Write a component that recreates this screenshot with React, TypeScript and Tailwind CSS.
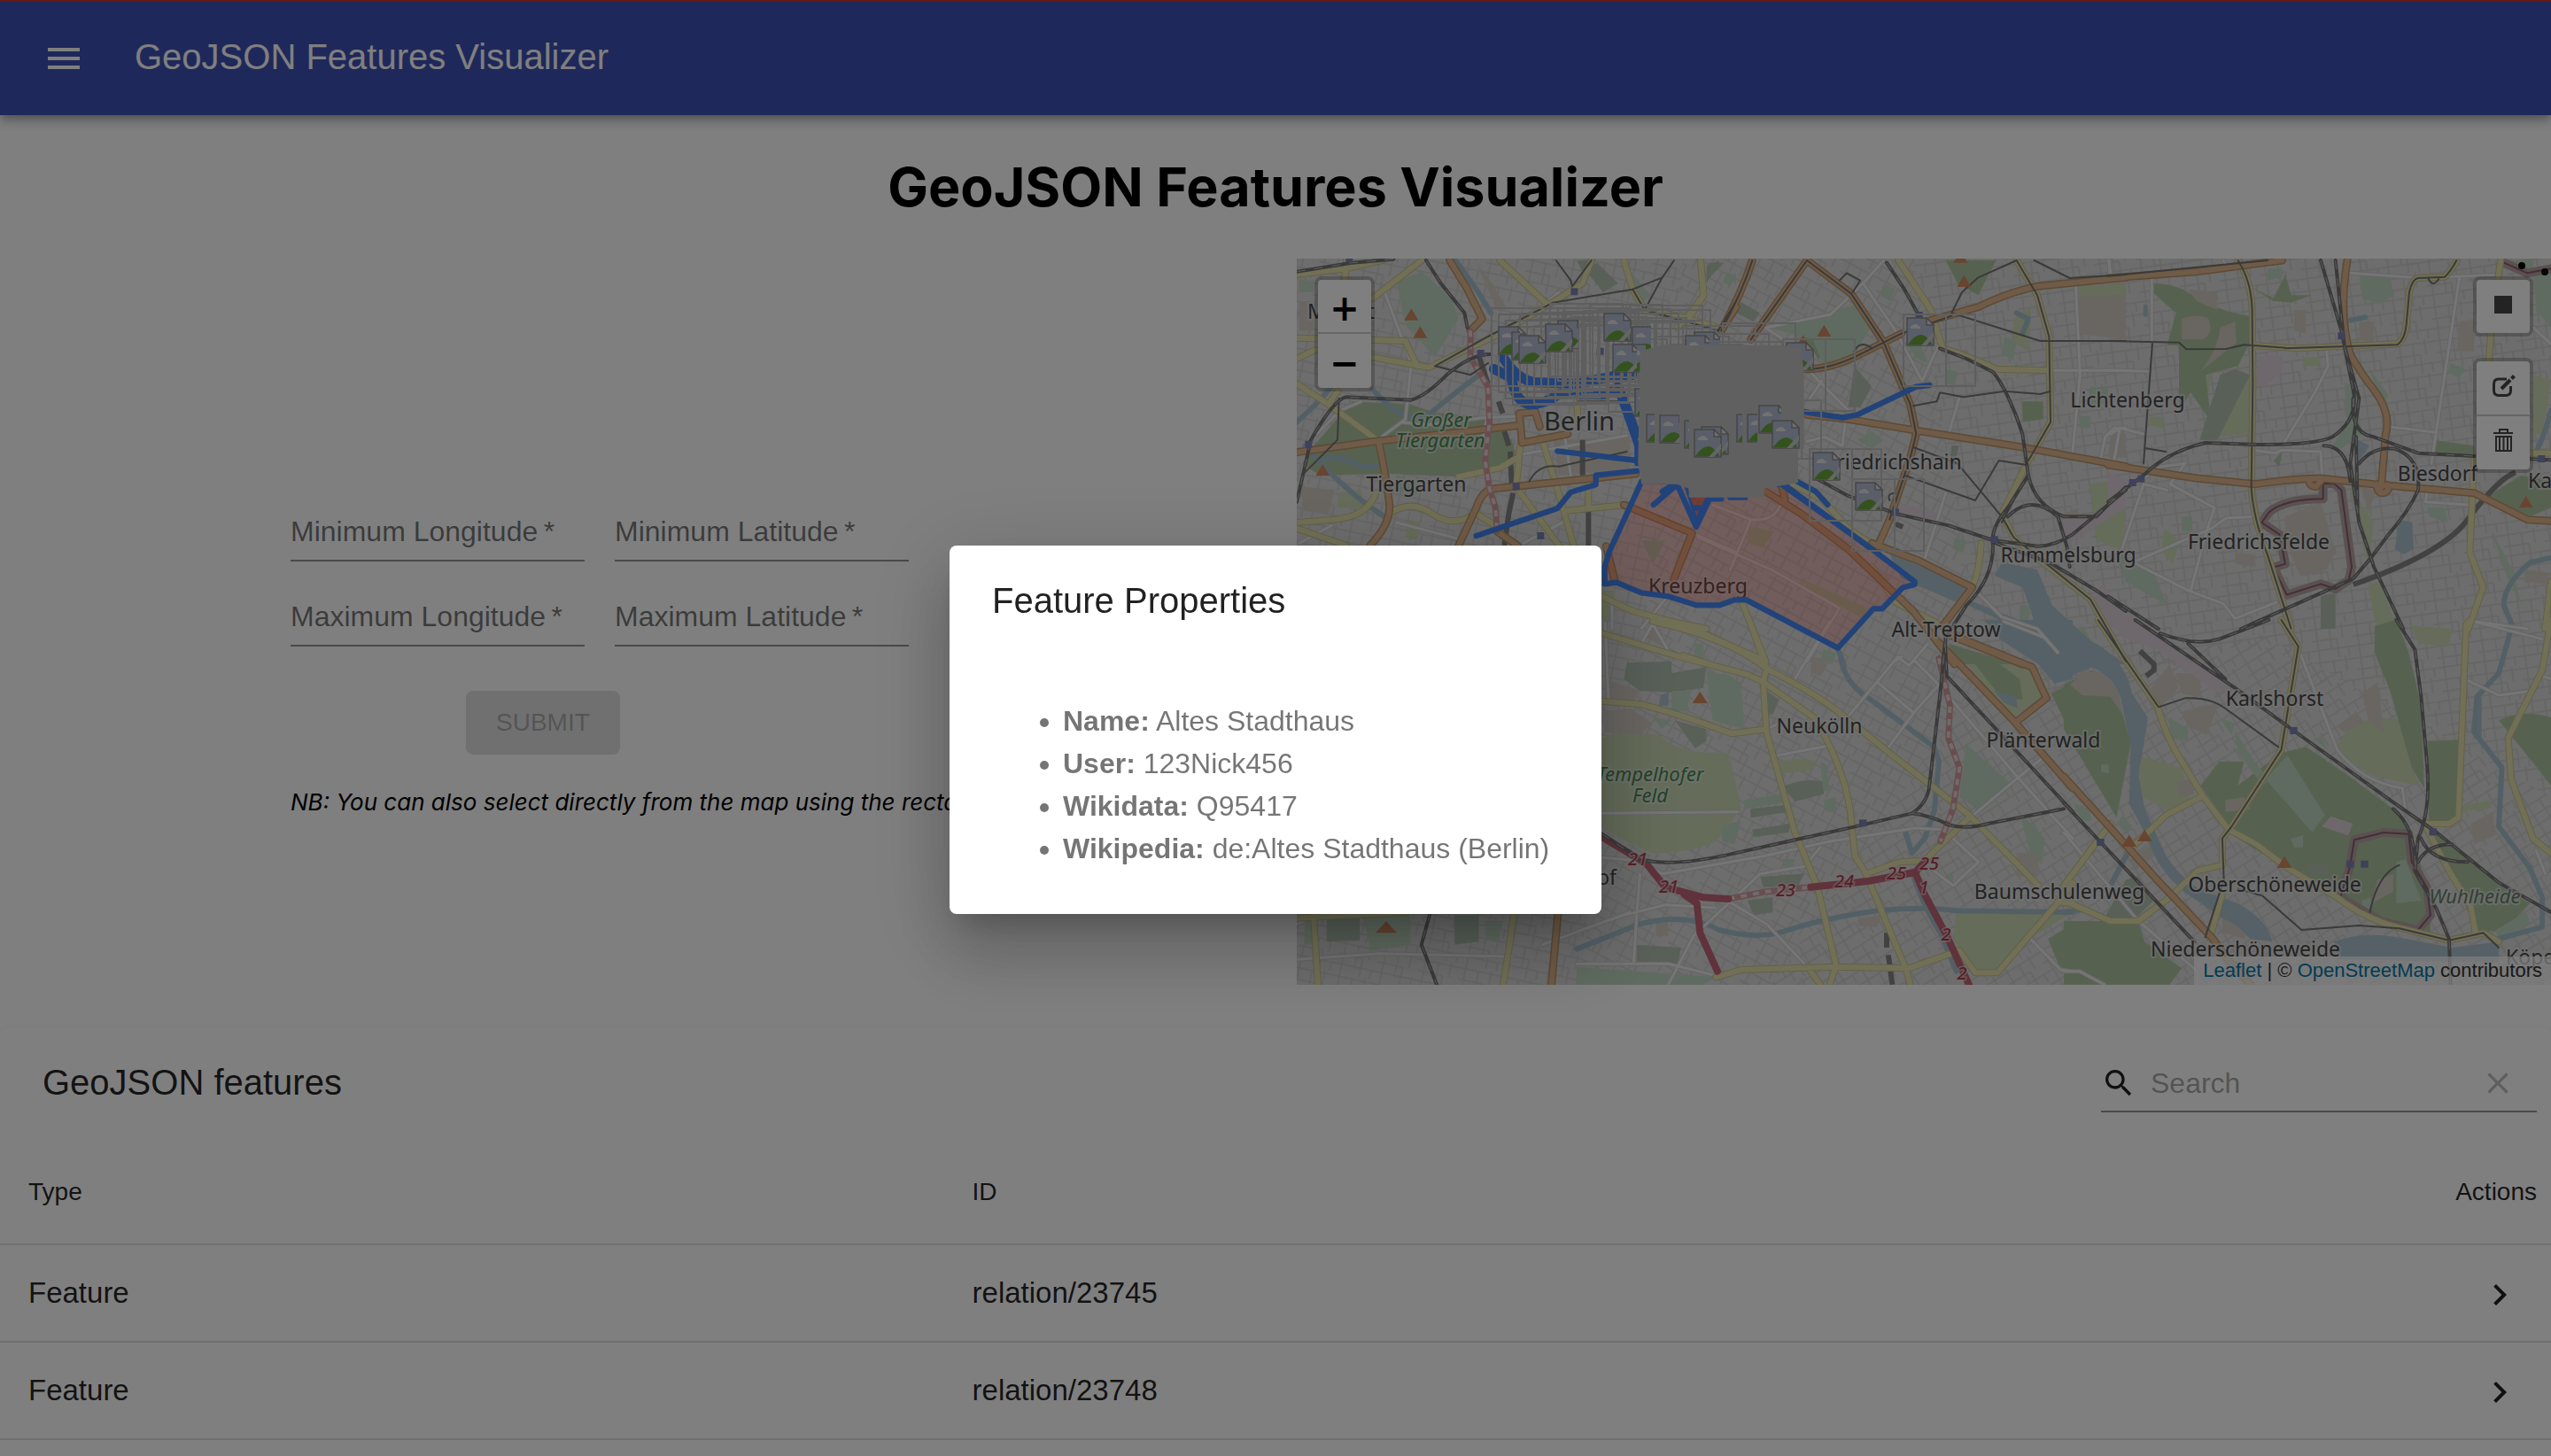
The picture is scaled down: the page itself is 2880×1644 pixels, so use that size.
import React from "react";

/* ---------- Map data ---------- */

type Sector = {
  t: string;
  forest?: string;
  park?: string;
  grass?: string;
  wood?: string;
  built?: string;
  industry?: string;
  waterArea?: string;
  water?: string;
  white?: string;
  yellow?: string;
  orange?: string;
  rail?: string;
  tram?: string;
  motorway?: string;
  tunnel?: string;
  bypass?: string;
  boundary?: string;
  peaks?: [number, number][];
  stations?: [number, number][];
};

const sectors: Sector[] = [
  {
    t: "translate(1460 290) scale(.33333)",
    forest:
      "M70 640L200 490L400 500L480 530L640 540L740 620L760 700L560 745L330 735L90 740L30 700Z",
    park: "M350 80L440 50L540 150L560 210L480 340L380 230ZM1150 60L1210 130L1180 160ZM20 80L70 80L70 120L20 120ZM1480 60L1500 60L1500 100ZM350 740L440 760L420 800L340 790ZM1180 960L1260 960L1220 1040Z",
    grass: "M150 800L230 790L240 850L150 850ZM390 890L430 900L420 960L380 950ZM1044 1130L1090 1130L1080 1230L1044 1230ZM640 640L720 640L720 700L650 700Z",
    wood: "M985 40L1030 20L1100 90L1050 120ZM1400 30L1445 12L1400 90ZM960 12L1020 12L980 50Z",
    built:
      "M20 150L70 150L70 250L20 250ZM620 20L680 100L720 170L690 180ZM880 620L1140 610L1140 720L900 740ZM30 780L140 790L120 870L30 860Z",
    water:
      "M550 12L620 110L670 190M12 560Q80 500 130 440M270 450Q330 520 390 540L440 550Q560 450 630 400M40 640Q180 800 310 880M90 690Q140 670 210 700T300 690",
    white:
      "M310 120L400 360L380 550L300 610M370 560L450 570L640 545L760 540M80 600L160 520L230 490M660 370L670 500L640 620M770 670L1130 605M920 610L940 740M350 900L560 955M780 970L920 895M20 970L130 910M850 160L900 120M1500 1000L1350 935M1180 1258L1260 1160M1080 1260L1080 1160",
    yellow:
      "M12 60L180 40L300 12M180 12L175 80M435 12L270 140M12 275L380 285M12 345L75 315M270 340L460 375L700 260L860 165L980 90L1010 12M700 12L860 160M12 430L120 500L290 625M380 285L420 370M120 500L150 455M770 630L755 780L900 978M840 610L890 770L950 978M1380 12L1390 130L1330 210L1300 240M1120 12L1150 110L1190 180L1300 200L1440 240M325 870Q400 820 470 870T620 870L700 920M12 900L140 890Q250 880 280 800M12 920L180 978M925 860L1130 840M1000 770L1000 850M1044 1150L1150 1200L1300 1240L1400 1260M560 745L700 715L760 680M960 480L965 560",
    orange:
      "M12 662L280 625L560 595L770 570L765 530L820 525L835 575M770 570L775 630L930 600M290 630Q310 720 325 830Q335 900 260 978M560 978L620 850Q640 790 680 785L1160 735M530 12L590 110L640 210L600 250M1120 840L1350 935L1290 1090M1500 170L1450 250M1060 980L1090 1100M690 930L760 978",
    rail: "M12 50L200 20L340 8M450 12L500 90L580 190L590 240M12 830L60 620Q140 480 180 475Q300 480 400 485Q450 470 520 400Q600 330 670 330",
    tram: "M480 370L660 270L880 155L1150 110L1250 70L1290 12M480 370L600 400L660 360M945 100L1010 12M945 100L940 80L890 12M1150 110L1190 180L1440 250L1500 150M1190 180L1250 70M960 490L1120 490M30 740L150 620L155 480M800 760Q830 700 900 710L1130 660",
    tunnel: "M600 250L600 340L660 440L665 560L650 690L665 785L685 850L690 930",
    bypass: "M630 340L660 430M695 490L710 530M715 590L730 640M735 660L740 780M745 800L730 870L715 978M980 620L980 740M1000 850L1000 978",
    peaks: [[400, 195], [430, 255], [100, 722]],
    stations: [[952, 118], [635, 327], [52, 635], [755, 778], [838, 945], [1040, 320], [190, 6]],
  },
  {
    t: "translate(1900 290) scale(.33333)",
    park: "M290 240L480 190L600 160L640 230L560 370L480 380L440 280ZM680 90L720 110L700 150L670 130ZM890 380L930 390L920 440L890 430ZM1090 270L1130 290L1120 350L1080 330ZM150 50L180 70L160 100L135 85ZM590 620L640 590L680 620L640 650ZM750 290L800 280L830 360L800 350ZM1380 440L1440 440L1440 500L1380 500ZM1340 540L1380 540L1380 580L1345 580ZM40 1310L70 1310L70 1380L40 1380ZM1140 1180L1180 1180L1170 1230L1140 1230ZM920 950L960 960L950 1000L915 990Z",
    forest: "M300 240L400 220L480 290L460 350L410 270ZM890 12L1060 12L1000 130L930 90ZM1150 490L1220 490L1220 550L1150 560ZM900 1310L1130 1380L920 1380Z",
    wood: "M580 370L640 440L600 510L560 510ZM190 150L260 190L240 220L180 190ZM90 20L140 20L80 80ZM910 640L935 640L925 680L905 680Z",
    grass: "M1340 100L1500 90L1500 130L1340 130ZM1380 770L1500 750L1500 1000L1400 960ZM220 910L310 930L270 985L220 970ZM400 1090L630 1190L600 1220L420 1120ZM1120 210L1180 170L1170 320L1120 290Z",
    built: "M1340 130L1500 130L1500 280L1340 260ZM1260 880L1340 850L1340 960L1300 960ZM650 1060L700 1080L680 1130ZM1450 580L1500 600L1500 680L1440 680Z",
    industry: "M720 830L880 870L870 910L730 880ZM1270 890L1400 880L1500 790L1500 850L1330 960L1300 960ZM1420 1110L1500 1200L1500 1300L1380 1160Z",
    waterArea:
      "M700 1005L850 1065L980 1130L950 1180L740 1090ZM955 1175L1200 1290L1230 1380L1500 1380L1380 1300L1250 1180L1200 1060L1080 1035L1055 1080L1150 1120L1180 1200L1190 1250L975 1165Z",
    water: "M525 1330L545 1380M1130 190L1170 210L1150 260",
    white:
      "M280 240L500 195L610 90L680 12M280 240L340 280M610 90L720 250L810 420L870 290M430 390L560 520M470 420L430 480M1330 90L1345 400L1320 660M1240 385L1500 385M935 480L900 600M890 800L820 1020M1000 1140L1080 1220L1200 1260L1270 1340M550 560L540 640L480 610L420 625M1415 680L1430 610L1460 580L1500 580M420 1370L530 1190L300 1060L50 950M160 1060L230 890M100 840L230 890Q310 900 335 830M720 1370L740 1355M1440 12L1450 60",
    yellow:
      "M60 12L70 130L20 210M730 12L840 180L880 310Q980 340 1060 380L1240 385M1130 12L1200 130L1240 270L1245 560L1170 690L1080 870L1120 950L1200 1020L1380 1160L1500 1370M370 770L470 820L560 920L650 980M1010 970Q1005 1060 980 1120M0 1245L280 1370M200 1170L280 1370M640 1050L720 1170L860 1240M0 1350L90 1380",
    orange:
      "M235 12Q200 120 130 250M420 12L230 280M420 12L570 125L680 290L770 500L790 600L770 680L700 890L660 980M400 380Q480 385 580 340L740 260M840 215L1000 170Q1100 120 1200 100L1500 70M420 535L560 550L800 590L1150 645L1500 710M280 795L400 870L560 990L780 1200L920 1380M640 970L800 1030L980 1120L880 1250M900 1280L1150 1380M335 780L345 820M0 1015L30 940",
    rail: "M690 20L750 110L800 200M870 310L960 345L1050 390Q1100 450 1150 600L1170 740L1100 850Q1040 920 1050 980Q1050 1090 960 1180L890 1290L880 1380M450 750L560 810L720 870L900 910L1050 960L1200 980Q1260 980 1320 940L1500 790M1170 740Q1190 840 1290 880L1400 880L1500 780M1100 880Q1180 800 1270 880L1300 980L1310 1050M1060 970L1250 1040L1400 1130L1500 1200",
    tram: "M235 12Q200 120 130 250M420 12L230 280M420 12L570 125L680 290L770 500L790 600L770 680L700 890M400 380Q480 385 580 340L740 260L910 200M580 320Q600 280 640 310M1190 12L1310 72L1500 60M1130 12L1000 70L945 120L910 190L1210 285L1500 285M1130 12L1200 130L1240 270L1245 560L1170 690M780 505L860 490L870 460L950 475L1090 455L1210 465L1245 455M780 645L930 700L1080 880L1120 950L1380 1160L1500 1370M750 740L990 825L1070 690L1165 705M530 80L555 55L600 80L575 120M1165 740L1080 900M720 800Q690 800 700 825",
    bypass: "M690 910L660 980M720 905L745 915",
    peaks: [[478, 250], [952, 82], [940, 0], [407, 285]],
    stations: [[720, 865], [1055, 958], [800, 198]],
  },
  {
    t: "translate(2380 290) scale(.33333)",
    forest:
      "M150 90Q240 90 300 140Q400 190 480 200L480 290L440 370L330 400L350 560L280 460L240 520L240 300L200 300L230 190L150 120ZM480 100L560 140L600 60L620 130L690 130L620 155L560 150ZM1270 820L1400 740L1500 760L1500 850L1430 880L1380 870ZM1100 620L1240 640L1240 670L1100 670Z",
    park: "M850 60L950 60L970 130L920 160L860 140ZM540 40L590 40L590 70L540 80ZM880 370L950 470L930 500ZM1160 360L1210 380L1190 410L1150 390ZM20 1000L150 1060L200 1180L60 1100ZM250 880L285 880L280 930L250 930ZM1300 930L1370 1060L1400 1180L1340 1060ZM1440 60L1500 40L1500 240L1450 180ZM1330 12L1440 12L1440 50ZM800 420L840 470L860 600L790 650L760 640L810 560ZM1080 850L1140 850L1150 900L1090 880Z",
    wood: "M380 400L430 380L480 400L370 620L310 620ZM720 1150L770 1140L770 1260L720 1260ZM560 690L590 660L580 710Z",
    grass: "M480 400L480 600L370 610ZM660 340L720 340L715 370L660 370ZM820 780L900 900L880 1060L850 900ZM880 1110L920 1100L980 1260L910 1260ZM1440 400L1500 420L1470 600L1440 600ZM140 540L190 545L185 580L140 570ZM190 920L240 960L220 1040L180 1000ZM250 400L350 400L340 460L250 450Z",
    built: "M250 210Q300 190 340 210Q360 260 320 280L250 280ZM310 390Q370 320 380 240L430 220L435 290ZM270 110L370 120L370 180L300 150ZM1190 220L1240 210L1240 320L1180 320ZM860 780L910 790L880 870ZM430 1000L500 1010L490 1050L430 1040ZM1410 1060L1500 1070L1490 1110L1410 1100ZM850 220L900 220L900 290L850 280ZM600 880L720 830L770 1000L740 1060L650 1080L600 960ZM630 180L670 180L670 260L630 250Z",
    industry: "M510 340L590 330L590 390L530 440L500 430ZM0 730L80 760L0 820ZM0 1160L150 1260L0 1260Z",
    waterArea: "M985 890L1030 900L1035 990L1000 1008L972 990ZM845 620L885 640L850 690ZM120 160L135 165L132 205L118 200Z",
    water: "M1500 1020L1430 1035Q1340 1110 1340 1180L1370 1250M1500 520Q1480 600 1450 660M820 215L870 205",
    white:
      "M148 60L148 290M820 55L1030 70M1140 68L1330 60M740 320L745 370L700 460L590 640M1190 70L1110 600L1095 700M950 575L1110 595M490 655L570 665L585 655L720 660L725 750M10 600L40 580L120 600M20 690L40 580M85 1035L350 920L400 885L490 880M280 1130L330 940L360 850L210 770L260 700L180 710L120 750M85 1035L270 1130L390 1175L430 1225L570 1170M120 770L40 1010M120 770L200 790M1080 800L1075 830L1220 840M1440 240L1500 295M0 385L140 388M1240 1235L1420 1260M390 12L400 30M5 12L5 60",
    yellow:
      "M440 12Q490 90 488 200L490 430L485 780Q490 880 540 1010L620 1260M490 300L640 310L980 295Q1005 280 1010 230L1020 120Q1030 75 1050 72L1140 68Q1160 50 1180 12M1330 12L1300 200L1290 350M1240 680L1225 1000L1270 1120L1220 1260M1430 665L1500 665M1500 1100L1480 1260",
    orange:
      "M0 72L300 50L590 12M810 12Q780 200 820 330Q860 400 900 450Q960 530 940 600L925 780M0 705L300 750L500 770Q640 750 720 750L900 770L1240 800Q1340 850 1420 890L1500 895M910 770Q910 800 932 800Q955 795 945 772M680 752Q680 780 705 778L720 760",
    rail: "M720 12L790 250L830 450Q850 550 760 610Q700 640 480 635L330 630Q200 660 120 740L0 830M770 12L800 300L850 480L820 700L850 900L900 1050L1000 1260M830 480Q820 600 900 610L1050 665L1240 675M730 640Q810 640 820 760M840 610L845 860M850 700Q900 640 970 650Q1060 680 1050 790Q1020 860 950 940L890 1020L830 1090L450 1260M0 1150L170 1260M1430 685L1500 688",
    tram: "M0 65L300 35L540 12M0 285L240 290L265 313L400 312L460 298L600 308M150 290L120 700M125 648L195 660M440 12Q490 90 488 200L490 430L485 780Q490 880 540 1010L620 1260M600 310L980 298Q1005 280 1010 230L1020 120Q1030 75 1050 72L1140 68Q1160 50 1180 12M1085 75Q1100 105 1120 75",
    bypass: "M830 1110Q1120 1010 1210 900Q1320 750 1380 730",
    boundary:
      "M520 900L545 865Q600 820 728 820L728 768L765 768L790 790L825 1050L815 1095L770 1125L720 1108L605 1145L560 1052L600 1040L580 940ZM1340 20L1420 55L1500 40",
    peaks: [[1415, 830]],
    stations: [[790, 268], [83, 765], [112, 752], [1468, 684]],
  },
  {
    t: "translate(1780 700) scale(.35714 .33333)",
    grass: "M80 400Q150 370 260 390Q330 460 480 450L520 640L440 750Q360 790 240 790Q140 750 80 700ZM1200 990L1568 990L1430 1080L1340 1190L1260 1190L1190 1080ZM1190 90L1430 165L1470 260L1370 330ZM640 480L700 470L760 480L740 510L650 520Z",
    park: "M300 240L360 240L350 310L300 310ZM410 170L520 210L530 370L430 340ZM240 330L300 340L270 370ZM460 700L520 680L500 760L460 750ZM770 480L790 490L800 580L780 580ZM780 610L820 600L820 650L790 650ZM1230 420L1380 560L1280 650L1210 600ZM780 100L820 110L810 150L770 140ZM1400 650L1480 740L1470 830L1430 780ZM0 1175L440 1210L400 1235L0 1235ZM650 810L690 810L680 840L650 835ZM1170 860L1190 860L1190 890L1170 885ZM420 180L480 185L510 210L450 215ZM530 610L650 590L650 620L530 640Z",
    wood: "M160 145L300 140L300 180L410 160L400 230L300 245L200 240L150 200ZM310 340L410 370L410 410L375 435ZM650 565Q720 530 790 550L780 590L690 615ZM600 240L640 270L620 320L600 320ZM190 1100L330 1110L320 1165L190 1160ZM540 950L620 940L620 990L560 1000ZM580 870L720 860L700 900L590 905ZM550 640L680 625L670 650L550 670ZM555 710L675 690L670 720L560 735Z",
    forest: "M1500 250L1568 210L1568 330L1540 335ZM1490 1080L1568 1030L1568 1180L1530 1185ZM1230 110L1300 120L1400 200L1410 270L1340 260ZM470 200L520 215L520 350L440 330L440 230Z",
    built: "M85 310L170 300L240 350L200 390L85 380ZM220 30L270 30L260 80L220 60ZM90 200L200 240L180 280L90 260ZM740 120L800 140L770 190L740 180ZM890 1010L960 1000L950 1040L890 1035ZM250 1020L290 1020L290 1070L250 1070ZM1390 790L1460 790L1460 870L1390 870Z",
    waterArea: "M1290 0L1568 0L1568 200L1510 215L1460 150L1430 130L1330 60ZM1320 240L1390 260L1395 300L1350 280ZM265 255L290 245L290 290L260 290Z",
    water:
      "M835 130Q850 220 930 270L1130 430L1145 480L1130 650L1100 740L1060 790L1040 720M0 1115L200 1030Q350 990 450 1050Q560 1080 640 1060Q780 1010 950 985Q1100 970 1200 985L1568 990M1060 850Q1090 960 1150 1060L1200 1190",
    white:
      "M90 10L95 130L100 270M210 70L240 12L290 105M1110 80L1050 155L1015 125L860 325M690 200L800 5M950 210L1065 315L1145 220L1070 140M1065 315L980 440M630 460L800 425M1145 220L1400 540L1568 740M1250 665L1400 530L1470 470M80 805L190 815L270 860L590 800L800 750L1070 705L1160 710L1270 820L1190 900L1130 850M80 655L510 650M200 860L190 1000L180 1165M0 1055L150 1000L280 965L440 975M290 1235L370 1070L480 960L580 860L720 835L770 770M490 960L600 1030L720 1165M0 1165L290 1165L440 1205M1430 1075L1530 1185L1568 1190M1350 5L1480 60L1520 110M600 370L640 350",
    yellow:
      "M80 45L310 120L540 185L590 210M240 5Q480 60 600 165Q760 250 850 330L1000 460L1240 660L1460 900M550 12L600 165L590 210L600 380L690 720L760 900L820 1170L800 1235M590 210L750 330Q860 520 870 700L880 800L915 860L1040 1180L1055 1235M80 275L200 285Q300 310 490 385L600 370M915 860L1020 820L1100 815L1240 670M440 1210L520 1185L820 1175L1050 1180L1210 1120L1260 1195L1330 1195L1430 1070L1520 960L1568 890M740 1190L770 1235M1520 955L1568 960",
    orange: "M1130 60L1380 340L1568 570M1170 30L1210 60L1440 160L1485 265L1390 345",
    rail: "M80 725L200 810Q300 840 500 790L880 700L1060 655Q1110 620 1115 560L1150 240L1165 80M1165 80L1170 190L1300 340L1568 650M1060 655Q1110 660 1180 695Q1230 710 1300 690L1540 640",
    motorway:
      "M80 735L220 825L280 905L400 940L480 945M740 905L920 885L1070 855L1100 930L1170 1070L1240 1235M1070 855L1100 820M340 930L380 960L390 1060L445 1190",
    tunnel: "M480 945L600 920L740 905M1145 130L1180 290L1175 400L1210 500L1190 640L1150 750",
    bypass: "M980 1060L980 1110M985 1135L990 1170M992 1190L998 1235",
    peaks: [[390, 262]],
    stations: [[905, 688]],
  },
  {
    t: "translate(2330 700) scale(.35075 .33333)",
    forest:
      "M0 220L90 170L170 240L190 320L215 420L170 670L0 370ZM440 560L500 480L580 480L560 560L700 450L780 430L920 530L1060 640L1120 720L1180 950L1180 1060L1020 1020L880 930L700 830L560 740ZM1000 20L1070 0L1110 110L1150 290L1160 570L1120 500L1050 240L1000 110ZM1170 410L1280 405L1260 680L1175 680ZM1400 340Q1480 300 1568 330L1568 560L1500 470ZM0 1020L240 1020L260 1090L380 1180L340 1235L0 1235ZM1180 700L1400 900L1500 960L1420 1050L1330 1060L1250 860Z",
    wood: "M200 880L240 870L290 950L230 1010L130 1010ZM780 830L840 820L860 860L800 870Z",
    grass:
      "M870 440L920 360L1000 330L1090 340L1120 480L1140 560L1000 530ZM240 460L380 500L410 620L330 640L250 600ZM660 690L740 660L790 720L720 760ZM1120 20L1250 30L1240 90L1140 80ZM1030 60L1090 160L1120 400L1110 400L1070 230ZM1280 630L1380 610L1370 640L1280 650Z",
    park: "M20 40L60 20L100 90ZM550 370L600 460L660 540L640 560L560 450ZM800 400L830 400L850 440ZM700 480L720 460L840 660L800 720L650 540ZM190 660L220 700L200 720L170 690ZM120 490L145 490L145 520L120 515ZM730 740L770 730L770 770L740 770ZM1070 820L1100 810L1150 950L1070 960ZM960 950L990 940L985 980L960 980ZM880 1110L930 1090L960 1140L890 1140ZM1010 1100L1080 1110L1080 1140L1010 1130ZM1390 1050L1490 990L1500 1030L1400 1080ZM340 330L400 370L400 410L340 400ZM500 330L550 350L540 390ZM30 620L80 640L90 680L60 680Z",
    built:
      "M20 220L60 180L130 170L170 200L190 320L150 260L60 255ZM280 230L340 150L370 230L310 295ZM380 310L500 280L460 390L400 360ZM360 550L410 540L420 590L370 600ZM880 360L940 310L970 350L900 380ZM960 250L1010 210L1030 380L980 340ZM360 180L440 180L440 260L380 250ZM510 1010L600 1040L580 1080L510 1060ZM520 610L580 600L600 640L520 650ZM1010 880L1060 860L1060 920L990 960ZM1310 690L1380 650L1390 730L1320 760ZM210 810L280 760L290 800L230 850Z",
    industry: "M150 0L230 0L540 230L500 250L300 100L200 60ZM830 700L860 665L930 690L915 730Z",
    waterArea:
      "M0 20L120 90Q200 150 220 250L270 330Q260 420 240 520L260 640L330 800Q380 880 450 920L560 960Q660 1020 670 1090L600 1080Q560 1030 510 1010L400 930Q300 850 270 740L210 620L215 430L190 300Q180 200 90 160L0 200ZM870 1090Q960 1050 1100 1080L1250 1110L1400 1090L1400 1160L880 1150ZM1320 270L1345 260L1345 400L1320 390Z",
    water: "M1440 30L1400 180L1330 260L1320 380L1410 500L1400 700L1500 840L1540 940L1540 1040L1400 1080M210 780L150 900M0 990L60 980",
    white:
      "M760 110L880 440Q960 550 1090 570L1100 650L1160 690M1320 5L1540 65M1300 205L1400 255L1510 240M1540 190L1568 200M0 720L240 1020L430 1190L430 1235M1550 860L1520 780M0 1190L50 1190L130 1235",
    yellow:
      "M110 0L300 290Q330 400 380 480L450 600L530 710L620 760L720 840L880 940Q980 1020 1090 1045L1240 1085L1350 1060L1400 1090M700 0L755 90L700 440L540 700L510 740L510 830L430 850L340 940L240 1020L150 1020L20 960M440 600L330 660L210 780M510 930L470 1080M1310 0L1295 15L1270 670L1240 690L1160 690L1240 850L1310 970L1325 1060M1568 0L1540 170L1430 400L1440 540L1510 740L1568 790M0 900L150 690",
    orange: "M0 530L300 880L480 1080L520 1140L600 1235",
    rail: "M230 0L550 230L740 375L1050 610L1200 720L1400 890L1568 990M310 45Q420 90 500 65L660 0M400 80L520 200M1070 0L1130 100L1150 260L1170 500Q1180 650 1140 740L1130 850L1200 980L1240 1080L1245 1235M1060 640Q1130 700 1130 830M1150 740Q1180 820 1300 820M1140 820Q1170 760 1250 760M0 620L120 755L420 1090",
    tram: "M110 0L305 295L390 265Q470 260 520 300L690 430M700 0L755 90L700 440L540 700L510 740L515 880L455 1075M560 910L640 935L765 1050L950 1035L1080 1045L1240 1085L1350 1060L1400 1110M985 990Q1010 860 1080 830",
    bypass: "M245 105L290 150L290 170L265 190",
    boundary: "M920 840L935 745L1030 720L1110 725L1120 820L1170 910L1180 1000L1140 1050L1020 1020L890 940Z",
    peaks: [[210, 748], [260, 730], [710, 820]],
    stations: [[740, 375], [118, 753], [1188, 718], [922, 827], [968, 827]],
  },
  {
    t: "translate(1060 600) scale(.49751 .33333)",
    wood: "M880 1300L955 1300L955 1385L880 1390ZM1170 1300L1225 1300L1225 1390L1170 1400Z",
    park: "M960 1300L1070 1300L1070 1400L980 1420ZM830 1310L850 1310L850 1400L830 1400ZM1240 1320L1280 1320L1270 1390L1240 1380Z",
    white: "M1370 1400L1568 1290M812 1330L860 1300M812 1450L1000 1430L1300 1440",
    yellow: "M1305 1290L1295 1400L1280 1536M850 1290L860 1536M812 1310L1060 1290",
    orange: "M1405 1290L1390 1536",
    rail: "M1115 1290L1095 1400L1130 1536",
    peaks: [[1015, 1340]],
  },
];

type Label = { x: number; y: number; s: string; k?: "city" | "park" | "dim"; a?: "start" | "end" };

const labels: Label[] = [
  { x: 1783, y: 486, s: "Berlin", k: "city" },
  { x: 1627, y: 482, s: "Großer", k: "park" },
  { x: 1626, y: 505, s: "Tiergarten", k: "park" },
  { x: 1599, y: 555, s: "Tiergarten" },
  { x: 1514, y: 360, s: "Moabit" },
  { x: 1917, y: 670, s: "Kreuzberg" },
  { x: 2138, y: 530, s: "Friedrichshain" },
  { x: 2402, y: 460, s: "Lichtenberg" },
  { x: 2335, y: 635, s: "Rummelsburg" },
  { x: 2197, y: 719, s: "Alt-Treptow" },
  { x: 2550, y: 620, s: "Friedrichsfelde" },
  { x: 2752, y: 543, s: "Biesdorf" },
  { x: 2854, y: 551, s: "Kaulsdorf", a: "start" },
  { x: 2054, y: 828, s: "Neukölln" },
  { x: 2307, y: 844, s: "Plänterwald" },
  { x: 2568, y: 797, s: "Karlshorst" },
  { x: 1863, y: 882, s: "Tempelhofer", k: "park" },
  { x: 1863, y: 906, s: "Feld", k: "park" },
  { x: 1825, y: 999, s: "Tempelhof", a: "end" },
  { x: 2325, y: 1015, s: "Baumschulenweg" },
  { x: 2568, y: 1007, s: "Oberschöneweide" },
  { x: 2535, y: 1080, s: "Niederschöneweide" },
  { x: 2794, y: 1020, s: "Wuhlheide", k: "dim" },
  { x: 2829, y: 1089, s: "Köpenick", a: "start" },
];

const exits: [number, number, string][] = [
  [1849, 977, "21"],
  [1884, 1008, "21"],
  [2016, 1012, "23"],
  [2082, 1002, "24"],
  [2141, 993, "25"],
  [2178, 982, "25"],
  [2172, 1009, "1"],
  [2197, 1062, "2"],
  [2215, 1106, "2"],
];

const markers: [number, number, number][] = [
  [1691, 368, 32], [1706, 374, 10], [1714, 378, 32], [1758, 361, 24], [1744, 365, 32],
  [1842, 368, 22], [1810, 353, 32], [1838, 388, 20], [1820, 388, 28], [1912, 374, 30], [1902, 378, 28],
  [2016, 386, 32], [2152, 358, 32], [2046, 510, 32], [2094, 544, 32],
];

const blockMarkers: [number, number, number][] = [
  [1845, 438, 6], [1858, 467, 10], [1873, 468, 23], [1901, 474, 6], [1920, 481, 32], [1912, 484, 32],
  [1960, 467, 7], [1972, 467, 12], [1985, 457, 26], [2000, 474, 32],
];

/* Outlines left by image tiles that overlap around the city centre. */
const tileRects: [number, number, number, number][] = [
  ...Array.from({ length: 14 }, (_, i) => [1684 + i * 8, 348 + ((i * 7) % 22), 82, 88] as [number, number, number, number]),
  ...Array.from({ length: 12 }, (_, i) => [1750 + i * 9, 343 + ((i * 5) % 24), 82, 82] as [number, number, number, number]),
  ...Array.from({ length: 8 }, (_, i) => [1840 + i * 15, 362 + ((i * 9) % 30), 82, 82] as [number, number, number, number]),
  [1960, 438, 74, 80],
  [1958, 452, 98, 66],
  [1816, 383, 66, 82],
];

function Layer({ k, stroke, width, dash, fill, cap = "round" }: {
  k: keyof Sector;
  stroke?: string;
  width?: number;
  dash?: string;
  fill?: string;
  cap?: "round" | "butt";
}) {
  return (
    <>
      {sectors.map((s, i) =>
        s[k] ? (
          <path
            key={i}
            d={s[k] as string}
            transform={s.t}
            fill={fill ?? "none"}
            stroke={stroke ?? "none"}
            strokeWidth={width}
            strokeDasharray={dash}
            strokeLinecap={cap}
            strokeLinejoin="round"
            vectorEffect="non-scaling-stroke"
          />
        ) : null,
      )}
    </>
  );
}

function BrokenImage({ x, y, w }: { x: number; y: number; w: number }) {
  return (
    <svg x={x} y={y} width={w} height="33">
      <path d="M1 1H23L31 9V32H1Z" fill="#b2bcd2" stroke="#8c8c8c" strokeWidth="1.5" />
      <path d="M23 1V9H31Z" fill="#dedede" stroke="#8c8c8c" strokeWidth="1.5" />
      <path d="M5 13a4 3 0 0 1 3-4a4 4 0 0 1 6 1a3 2.500 0 0 1 2 3Z" fill="#e2e2e2" />
      <path d="M2 31Q10 19 18 20Q26 23 29 31Z" fill="#68a43c" />
      <path d="M17 32L31 17V23L23 32Z" fill="#cacaca" />
    </svg>
  );
}

function CityMap() {
  return (
    <svg
      className="absolute inset-0 h-full w-full"
      viewBox="1464 292 1416 820"
      preserveAspectRatio="xMidYMid slice"
      role="img"
      aria-label="Map of Berlin"
      fontFamily='"Noto Sans", sans-serif'
    >
      <defs>
        {[
          ["g0", 12],
          ["g1", -32],
          ["g2", 28],
          ["g3", -8],
        ].map(([id, r]) => (
          <pattern key={id} id={id as string} width="46" height="38" patternUnits="userSpaceOnUse" patternTransform={`rotate(${r})`}>
            <path d="M0 4H46M0 17H28M0 28H46M6 0V38M21 4V28M35 0V17M40 28V38M28 17V38" fill="none" stroke="#cac9c8" strokeWidth="1.5" />
          </pattern>
        ))}
      </defs>

      <rect x="1464" y="292" width="1416" height="820" fill="#dbdada" />
      <path d="M1464 292H1900L1860 700L1780 1112H1464Z" fill="url(#g0)" />
      <path d="M1900 292H2160L2240 760L2000 1112H1780L1860 700Z" fill="url(#g2)" />
      <path d="M2160 292H2520L2560 720L2300 800L2240 760Z" fill="url(#g3)" />
      <path d="M2240 760L2560 720L2880 900V1112H2000Z" fill="url(#g1)" />
      <path d="M2520 292H2880V900L2560 720Z" fill="url(#g3)" />

      <Layer k="grass" fill="#cbd8b2" />
      <Layer k="forest" fill="#adc49f" />
      <Layer k="wood" fill="#b0c0b1" />
      <Layer k="park" fill="#bfd6c0" />
      <Layer k="built" fill="#d2ccc4" />
      <Layer k="industry" fill="#dcd0da" />
      <Layer k="waterArea" fill="#aac2cc" />
      <Layer k="water" stroke="#a5c0cc" width={6} />

      <Layer k="white" stroke="#cacaca" width={5} />
      <Layer k="white" stroke="#ebebeb" width={3} />
      <Layer k="bypass" stroke="#858585" width={6} cap="butt" />
      <Layer k="boundary" stroke="#b5a3a3" width={10} />
      <Layer k="boundary" stroke="#8c5a6e" width={2} />
      <Layer k="yellow" stroke="#c4c08e" width={8} />
      <Layer k="yellow" stroke="#e2dfac" width={6} />
      <Layer k="orange" stroke="#b8956a" width={9} />
      <Layer k="orange" stroke="#deb68e" width={6} />
      <Layer k="tunnel" stroke="#d29a9c" width={7} />
      <Layer k="tunnel" stroke="#e4d4d4" width={4} dash="7 7" cap="butt" />
      <Layer k="motorway" stroke="#c06476" width={8} />
      <Layer k="tram" stroke="#747474" width={2} />
      <Layer k="rail" stroke="#747474" width={4} />
      <Layer k="rail" stroke="#b8b8b8" width={1} dash="10 10" cap="butt" />

      {sectors.map((s, i) => (
        <g key={i} transform={s.t}>
          {s.stations?.map(([x, y], j) => (
            <rect key={j} x={x - 12} y={y - 12} width="24" height="24" fill="#7c82b4" />
          ))}
          {s.peaks?.map(([x, y], j) => (
            <path key={j} d={`M${x} ${y - 20}l24 40h-48Z`} fill="#d08a60" />
          ))}
        </g>
      ))}
      <circle cx="2847" cy="300" r="4" />
      <circle cx="2873" cy="307" r="4" />

      {labels.map((l, i) => {
        const green = l.k === "park";
        const italic = green || l.k === "dim";
        return (
          <text
            key={i}
            x={l.x}
            y={l.y}
            textAnchor={l.a ?? "middle"}
            fontSize={l.k === "city" ? 29 : italic ? 22 : 23}
            fontStyle={italic ? "italic" : "normal"}
            fill={green ? "#3f8a4a" : l.k === "dim" ? "#64806a" : "#464646"}
            stroke="#e2e2e2"
            strokeOpacity="0.7"
            strokeWidth="4"
            strokeLinejoin="round"
            paintOrder="stroke"
          >
            {l.s}
          </text>
        );
      })}
      {exits.map(([x, y, s], i) => (
        <text key={i} x={x} y={y} textAnchor="middle" fontSize="20" fontWeight="500" fontStyle="italic" fill="#a8404e" stroke="#e6d2d2" strokeOpacity="0.7" strokeWidth="3" paintOrder="stroke">
          {s}
        </text>
      ))}

      <g transform="translate(1460 290) scale(.33333)" fill="none" stroke="#4486f4" strokeLinecap="round" strokeLinejoin="round" strokeWidth="19">
        <path
          d="M1180 760L1130 870L1070 1000L1055 1050V1108L1095 1103L1180 1138L1270 1150L1365 1180H1445L1495 1162H1535L1845 1325L1965 1192H1995L2065 1120L2105 1110V1100L1960 990L1660 770Z"
          fill="#ff4030"
          fillOpacity="0.2"
        />
        <path d="M1330 780H1420L1365 890Z" fill="#f02a10" fillOpacity="0.45" strokeWidth="10" />
        <path d="M895 658L1165 690M620 945L895 852L940 797L1025 772V740L1165 725" />
        <path d="M1220 840L1290 780M1250 795L1290 770M1300 770L1365 915L1410 820L1450 820M1360 850L1390 850M1730 525L1860 545L1910 535L2110 440L2155 435M1705 760L1770 795L1810 840M1660 775L1960 990M1480 815H1530" />
        <path strokeWidth="34" d="M710 340Q760 420 820 425L960 430L1080 405L1150 400M680 380L740 410Q750 490 800 500Q850 500 900 465H1060L1100 440L1120 490L1160 600" />
        <path d="M1105 470L1165 640V700" />
      </g>

      <g fill="none" stroke="#bcbcbc" strokeWidth="2">
        {tileRects.map(([x, y, w, h], i) => (
          <rect key={i} x={x} y={y} width={w} height={h} />
        ))}
        {markers.slice(-4).map(([x, y], i) => (
          <React.Fragment key={i}>
            <rect x={x - 3} y={y - 3} width="81" height="81" />
            <path d={`M${x + 45} ${y - 3}v81`} />
          </React.Fragment>
        ))}
      </g>
      {markers.map(([x, y, w], i) => (
        <BrokenImage key={i} x={x} y={y} w={w} />
      ))}
      <path
        transform="translate(1460 290) scale(.33333)"
        d="M1175 320L1240 300H1660L1720 310L1730 390V650H1710V765L1595 785V815H1340V785L1300 770H1180L1168 700Z"
        fill="#c0c0c0"
      />
      {blockMarkers.map(([x, y, w], i) => (
        <BrokenImage key={i} x={x} y={y} w={w} />
      ))}
    </svg>
  );
}

/* ---------- Controls ---------- */

const mapGroup =
  "flex flex-col divide-y-2 divide-[#ccc] overflow-hidden rounded-lg border-4 border-black/20 bg-white bg-clip-padding";
const mapButton = "flex w-[60px] items-center justify-center";
const zoomButton =
  "flex h-[61px] w-[60px] items-center justify-center pt-1 font-['DejaVu_Sans'] text-[40px] leading-none font-bold text-black";

function MapPanel() {
  return (
    <section className="relative h-[820px] overflow-hidden" aria-label="Map">
      <CityMap />
      <div className="absolute top-5 left-5">
        <div className={mapGroup}>
          <button type="button" aria-label="Zoom in" className={zoomButton}>
            +
          </button>
          <button type="button" aria-label="Zoom out" className={zoomButton}>
            −
          </button>
        </div>
      </div>
      <div className="absolute top-5 right-5 flex flex-col gap-6">
        <div className={mapGroup}>
          <button type="button" aria-label="Draw a rectangle" className={mapButton}>
            <svg viewBox="0 0 60 60" className="h-[60px] w-[60px]" fill="#464646">
              <path d="M20 18h20v20H20z" />
            </svg>
          </button>
        </div>
        <div className={mapGroup}>
          <button type="button" aria-label="Edit layers" className={mapButton}>
            <svg viewBox="0 0 60 60" className="h-[60px] w-[60px]" fill="none" stroke="#464646">
              <path d="M34 20H25Q19.500 20 19.500 25.500V33Q19.500 38.500 25 38.500H33Q38.500 38.500 38.500 33V28" strokeWidth="3" />
              <path d="M28 31L38 21" strokeWidth="4" />
              <path d="M39.500 19.500L42.500 16.500" strokeWidth="4" />
            </svg>
          </button>
          <button type="button" aria-label="Delete layers" className={mapButton}>
            <svg viewBox="0 0 60 60" className="h-[60px] w-[60px]" fill="none" stroke="#464646" strokeWidth="2">
              <path d="M19 19H41M26 19V15H35V19" />
              <path d="M22 23V39H39V23ZM26 23V39M30.500 23V39M35 23V39" />
            </svg>
          </button>
        </div>
      </div>
      <p className="absolute right-0 bottom-0 bg-white/70 px-2.5 text-[22px] leading-8 text-[#333]">
        <a href="#leaflet" className="text-[#0078a8]">Leaflet</a> | ©{" "}
        <a href="#osm" className="text-[#0078a8]">OpenStreetMap</a> contributors
      </p>
    </section>
  );
}

function Field({ id, label }: { id: string; label: string }) {
  return (
    <div className="grid pt-8">
      <input
        id={id}
        required
        className="col-start-1 row-start-1 h-16 w-full border-b-2 border-black/42 bg-transparent text-[32px] outline-none"
      />
      <label htmlFor={id} className="pointer-events-none col-start-1 row-start-1 self-center pb-1 text-[32px] leading-8 whitespace-nowrap text-black/54">
        {label}&thinsp;*
      </label>
    </div>
  );
}

function BoundsForm() {
  return (
    <form className="pt-[246px] pl-[328px]" onSubmit={(e) => e.preventDefault()}>
      <div className="grid w-[698px] grid-cols-2 gap-x-[34px]">
        <Field id="min-lon" label="Minimum Longitude" />
        <Field id="min-lat" label="Minimum Latitude" />
        <Field id="max-lon" label="Maximum Longitude" />
        <Field id="max-lat" label="Maximum Latitude" />
      </div>
      <button type="submit" disabled className="mt-[50px] ml-[198px] block h-[72px] rounded-lg bg-black/12 px-[34px] text-[28px] text-black/26">
        SUBMIT
      </button>
      <p className="mt-9 font-['Inter'] text-[26px] leading-9 whitespace-nowrap text-black italic">
        NB: You can also select directly from the map using the rectangle tool
      </p>
    </form>
  );
}

const rows = [
  { type: "Feature", id: "relation/23745" },
  { type: "Feature", id: "relation/23748" },
];

function FeatureTable() {
  return (
    <section className="mt-12 flex-1 rounded-t-lg bg-white text-black/87 shadow-[0_2px_6px_rgba(0,0,0,0.1)]">
      <div className="flex h-32 items-center justify-between pr-4 pl-12">
        <h2 className="pb-1 text-[40px] leading-[60px]">GeoJSON features</h2>
        <div className="flex h-16 w-[492px] items-center border-b-2 border-black/42">
          <svg viewBox="0 0 24 24" className="h-10 w-10 shrink-0" fill="currentColor">
            <path d="M15.500 14h-.79l-.28-.27C15.410 12.590 16 11.110 16 9.500 16 5.910 13.090 3 9.500 3S3 5.910 3 9.500 5.910 16 9.500 16c1.610 0 3.090-.59 4.230-1.570l.27.28v.79l5 4.990L20.490 19l-4.990-5zm-6 0C7.010 14 5 11.990 5 9.500S7.010 5 9.500 5 14 7.010 14 9.500 11.990 14 9.500 14z" />
          </svg>
          <input type="text" aria-label="Search" placeholder="Search" className="ml-4 min-w-0 flex-1 bg-transparent text-[32px] outline-none placeholder:text-black/36" />
          <button type="button" aria-label="Clear search" className="mr-6 text-black/26">
            <svg viewBox="0 0 24 24" className="h-10 w-10" fill="currentColor">
              <path d="M19 6.410L17.590 5 12 10.590 6.410 5 5 6.410 10.590 12 5 17.590 6.410 19 12 13.410 17.590 19 19 17.590 13.410 12z" />
            </svg>
          </button>
        </div>
      </div>
      <table className="w-full table-fixed border-separate border-spacing-0">
        <thead>
          <tr className="h-[118px] text-[28px]">
            <th scope="col" className="w-[37%] border-b-2 border-[#e0e0e0] px-8 text-left font-normal">Type</th>
            <th scope="col" className="border-b-2 border-[#e0e0e0] px-8 text-left font-normal">ID</th>
            <th scope="col" className="w-[20%] border-b-2 border-[#e0e0e0] pr-4 text-right font-normal">Actions</th>
          </tr>
        </thead>
        <tbody>
          {rows.map((r) => (
            <tr key={r.id} className="h-[110px] text-[33px]">
              <td className="border-b-2 border-[#e0e0e0] px-8">{r.type}</td>
              <td className="border-b-2 border-[#e0e0e0] px-8">{r.id}</td>
              <td className="border-b-2 border-[#e0e0e0] pr-[34px] text-right">
                <button type="button" aria-label={"Show " + r.id} className="inline-flex align-middle">
                  <svg viewBox="0 0 24 24" className="h-12 w-12" fill="currentColor">
                    <path d="M10 6L8.590 7.410 13.170 12l-4.580 4.590L10 18l6-6z" />
                  </svg>
                </button>
              </td>
            </tr>
          ))}
        </tbody>
      </table>
    </section>
  );
}

const properties = [
  ["Name:", "Altes Stadthaus"],
  ["User:", "123Nick456"],
  ["Wikidata:", "Q95417"],
  ["Wikipedia:", "de:Altes Stadthaus (Berlin)"],
];

function FeatureDialog() {
  return (
    <div className="fixed inset-0 z-20 flex items-center justify-center bg-black/50 pt-1">
      <div
        role="dialog"
        aria-modal="true"
        aria-labelledby="dialog-title"
        className="w-[736px] rounded-lg bg-white px-12 pt-[30px] pb-[50px] shadow-[0_22px_30px_-14px_rgba(0,0,0,0.2),0_48px_76px_6px_rgba(0,0,0,0.14),0_18px_92px_16px_rgba(0,0,0,0.12)]"
      >
        <h2 id="dialog-title" className="text-[40px] leading-[64px] text-black/87">
          Feature Properties
        </h2>
        <ul className="mt-20 list-disc pl-20 text-[32px] leading-[48px] text-black/54">
          {properties.map(([name, value]) => (
            <li key={name}>
              <b>{name}</b> {value}
            </li>
          ))}
        </ul>
      </div>
    </div>
  );
}

export default function App() {
  return (
    <div className="flex min-h-screen flex-col bg-white font-['Liberation_Sans',Arial,sans-serif]">
      <header className="flex h-[130px] items-center gap-14 border-t-2 border-[#d32f2f] bg-[#3f51b5] px-12 text-white shadow-[0_4px_8px_-2px_rgba(0,0,0,0.2),0_8px_10px_0_rgba(0,0,0,0.14),0_2px_20px_0_rgba(0,0,0,0.12)]">
        <button type="button" aria-label="Menu">
          <svg viewBox="0 0 24 24" className="h-12 w-12" fill="currentColor">
            <path d="M3 18h18v-2H3v2zm0-5h18v-2H3v2zm0-7v2h18V6H3z" />
          </svg>
        </button>
        <p className="pb-1 text-[40px] leading-[60px]">GeoJSON Features Visualizer</p>
      </header>
      <h1 className="py-12 text-center font-['Inter'] text-[61px] leading-[66px] font-bold text-black">
        GeoJSON Features Visualizer
      </h1>
      <main className="grid grid-cols-[61fr_59fr]">
        <BoundsForm />
        <MapPanel />
      </main>
      <FeatureTable />
      <FeatureDialog />
    </div>
  );
}
